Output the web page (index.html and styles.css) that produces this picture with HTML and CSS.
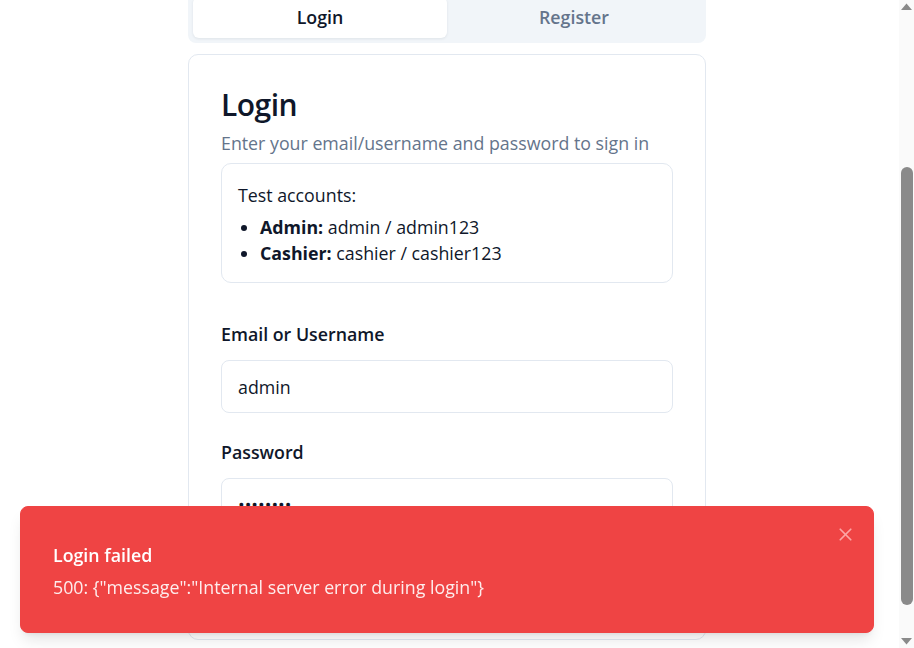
FILE: index.html
```html
<!DOCTYPE html>
<html lang="en">
<head>
<meta charset="utf-8">
<title>Login</title>
<link rel="stylesheet" href="styles.css">
</head>
<body>
<main class="page">
  <div class="auth">
    <div class="tabs" role="tablist">
      <button class="tab tab-active" type="button" role="tab">Login</button>
      <button class="tab" type="button" role="tab">Register</button>
    </div>
    <section class="card">
      <h1 class="card-title">Login</h1>
      <p class="card-desc">Enter your email/username and password to sign in</p>
      <div class="note">
        <p class="note-head">Test accounts:</p>
        <ul class="note-list">
          <li><strong>Admin:</strong> admin / admin123</li>
          <li><strong>Cashier:</strong> cashier / cashier123</li>
        </ul>
      </div>
      <form class="form">
        <div class="field">
          <label class="label" for="identifier">Email or Username</label>
          <input class="input" id="identifier" type="text" value="admin">
        </div>
        <div class="field">
          <label class="label" for="password">Password</label>
          <input class="input" id="password" type="password" value="admin123">
        </div>
        <button class="submit" type="button">Login</button>
      </form>
    </section>
  </div>
</main>
<div class="toast" role="alert">
  <div class="toast-title">Login failed</div>
  <div class="toast-desc">500: {"message":"Internal server error during login"}</div>
  <button class="toast-close" type="button" aria-label="Close">
    <svg viewBox="0 0 24 24" width="21" height="21" fill="none" stroke="currentColor" stroke-width="2" stroke-linecap="round" stroke-linejoin="round"><path d="M18 6 6 18"/><path d="m6 6 12 12"/></svg>
  </button>
</div>
<div class="scrollbar" aria-hidden="true">
  <svg class="sb-arrow" viewBox="0 0 15 15" width="15" height="15"><polygon points="2,10 7.5,3.5 13,10" fill="#8a8a8a"/></svg>
  <div class="sb-track"><div class="sb-thumb"></div></div>
  <svg class="sb-arrow" viewBox="0 0 15 15" width="15" height="15"><polygon points="2,5 13,5 7.5,11.5" fill="#8a8a8a"/></svg>
</div>
<script src="script.js"></script>
</body>
</html>
```

FILE: styles.css
```css
* { box-sizing: border-box; }

html { scroll-behavior: auto; }

body {
  margin: 0;
  font-family: "Open Sans", "Noto Sans", sans-serif;
  font-size: 17.8px;
  color: #0f172a;
  background: #ffffff;
}

.page {
  padding: 217px 20px 49px 0;
}

.auth {
  width: 518px;
  margin: 0 auto;
}

.tabs {
  display: grid;
  grid-template-columns: 1fr 1fr;
  padding: 5px;
  background: #f1f5f9;
  border-radius: 8px;
}

.tab {
  height: 41px;
  border: 0;
  border-radius: 6px;
  background: transparent;
  font-family: inherit;
  font-size: 17.8px;
  font-weight: 600;
  color: #64748b;
  padding: 0 0 2px;
}

.tab-active {
  background: #ffffff;
  color: #0f172a;
  box-shadow: 0 1px 3px rgba(15, 23, 42, 0.08);
}

.card {
  margin-top: 11px;
  border: 1px solid #e2e8f0;
  border-radius: 10px;
  padding: 32px 32px 33px;
  background: #ffffff;
}

.card-title {
  margin: 0;
  font-size: 30px;
  line-height: 36px;
  font-weight: 600;
  letter-spacing: -0.5px;
}

.card-desc {
  margin: 6.5px 0 0;
  line-height: 26.67px;
  color: #64748b;
}

.note {
  margin-top: 7.1px;
  border: 1px solid #e2e8f0;
  border-radius: 10px;
  padding: 17.5px 16px 14.5px;
  line-height: 26.67px;
}

.note-head { margin: 0; }

.note-list {
  margin: 5.33px 0 0;
  padding-left: 22px;
}

.note-list strong { font-weight: 700; }

.form {
  margin-top: 38px;
  display: flex;
  flex-direction: column;
}

.field + .field { margin-top: 25.6px; }

.label {
  display: block;
  font-weight: 600;
  line-height: 26.67px;
  margin-bottom: 12.5px;
}

.input {
  display: block;
  width: 100%;
  height: 53.33px;
  border: 1px solid #e2e8f0;
  border-radius: 8px;
  padding: 1px 16px 0;
  font-family: inherit;
  font-size: 17.8px;
  color: #0f172a;
  background: #ffffff;
  outline: none;
}

.submit {
  margin-top: 21.3px;
  height: 53.33px;
  border: 0;
  border-radius: 8px;
  background: #0f172a;
  color: #f8fafc;
  font-family: inherit;
  font-size: 17.8px;
  font-weight: 600;
}

.toast {
  position: fixed;
  left: 20px;
  right: 40px;
  bottom: 15px;
  padding: 34.5px 32px 31.5px;
  border: 1px solid #ef4444;
  border-radius: 8px;
  background: #ef4444;
  color: #ffffff;
  box-shadow: 0 10px 15px -3px rgba(0, 0, 0, 0.1), 0 4px 6px -4px rgba(0, 0, 0, 0.1);
}

.toast-title {
  font-weight: 600;
  line-height: 26.67px;
}

.toast-desc {
  margin-top: 5.33px;
  line-height: 26.67px;
  opacity: 0.9;
}

.toast-close {
  position: absolute;
  top: 12px;
  right: 12px;
  padding: 5px;
  border: 0;
  background: transparent;
  color: #fca5a5;
  display: flex;
}

.scrollbar {
  position: fixed;
  top: 0;
  right: 0;
  bottom: 0;
  width: 15px;
  display: flex;
  flex-direction: column;
  background: #fafafa;
}

.sb-arrow {
  display: block;
  flex: none;
}

.sb-track {
  flex: 1;
  padding: 152px 1px 0 2px;
}

.sb-thumb {
  height: 438px;
  border-radius: 6px;
  background: #8a8a8a;
}
```

FILE: script.js
```js
window.scrollTo(0, 225);
```
